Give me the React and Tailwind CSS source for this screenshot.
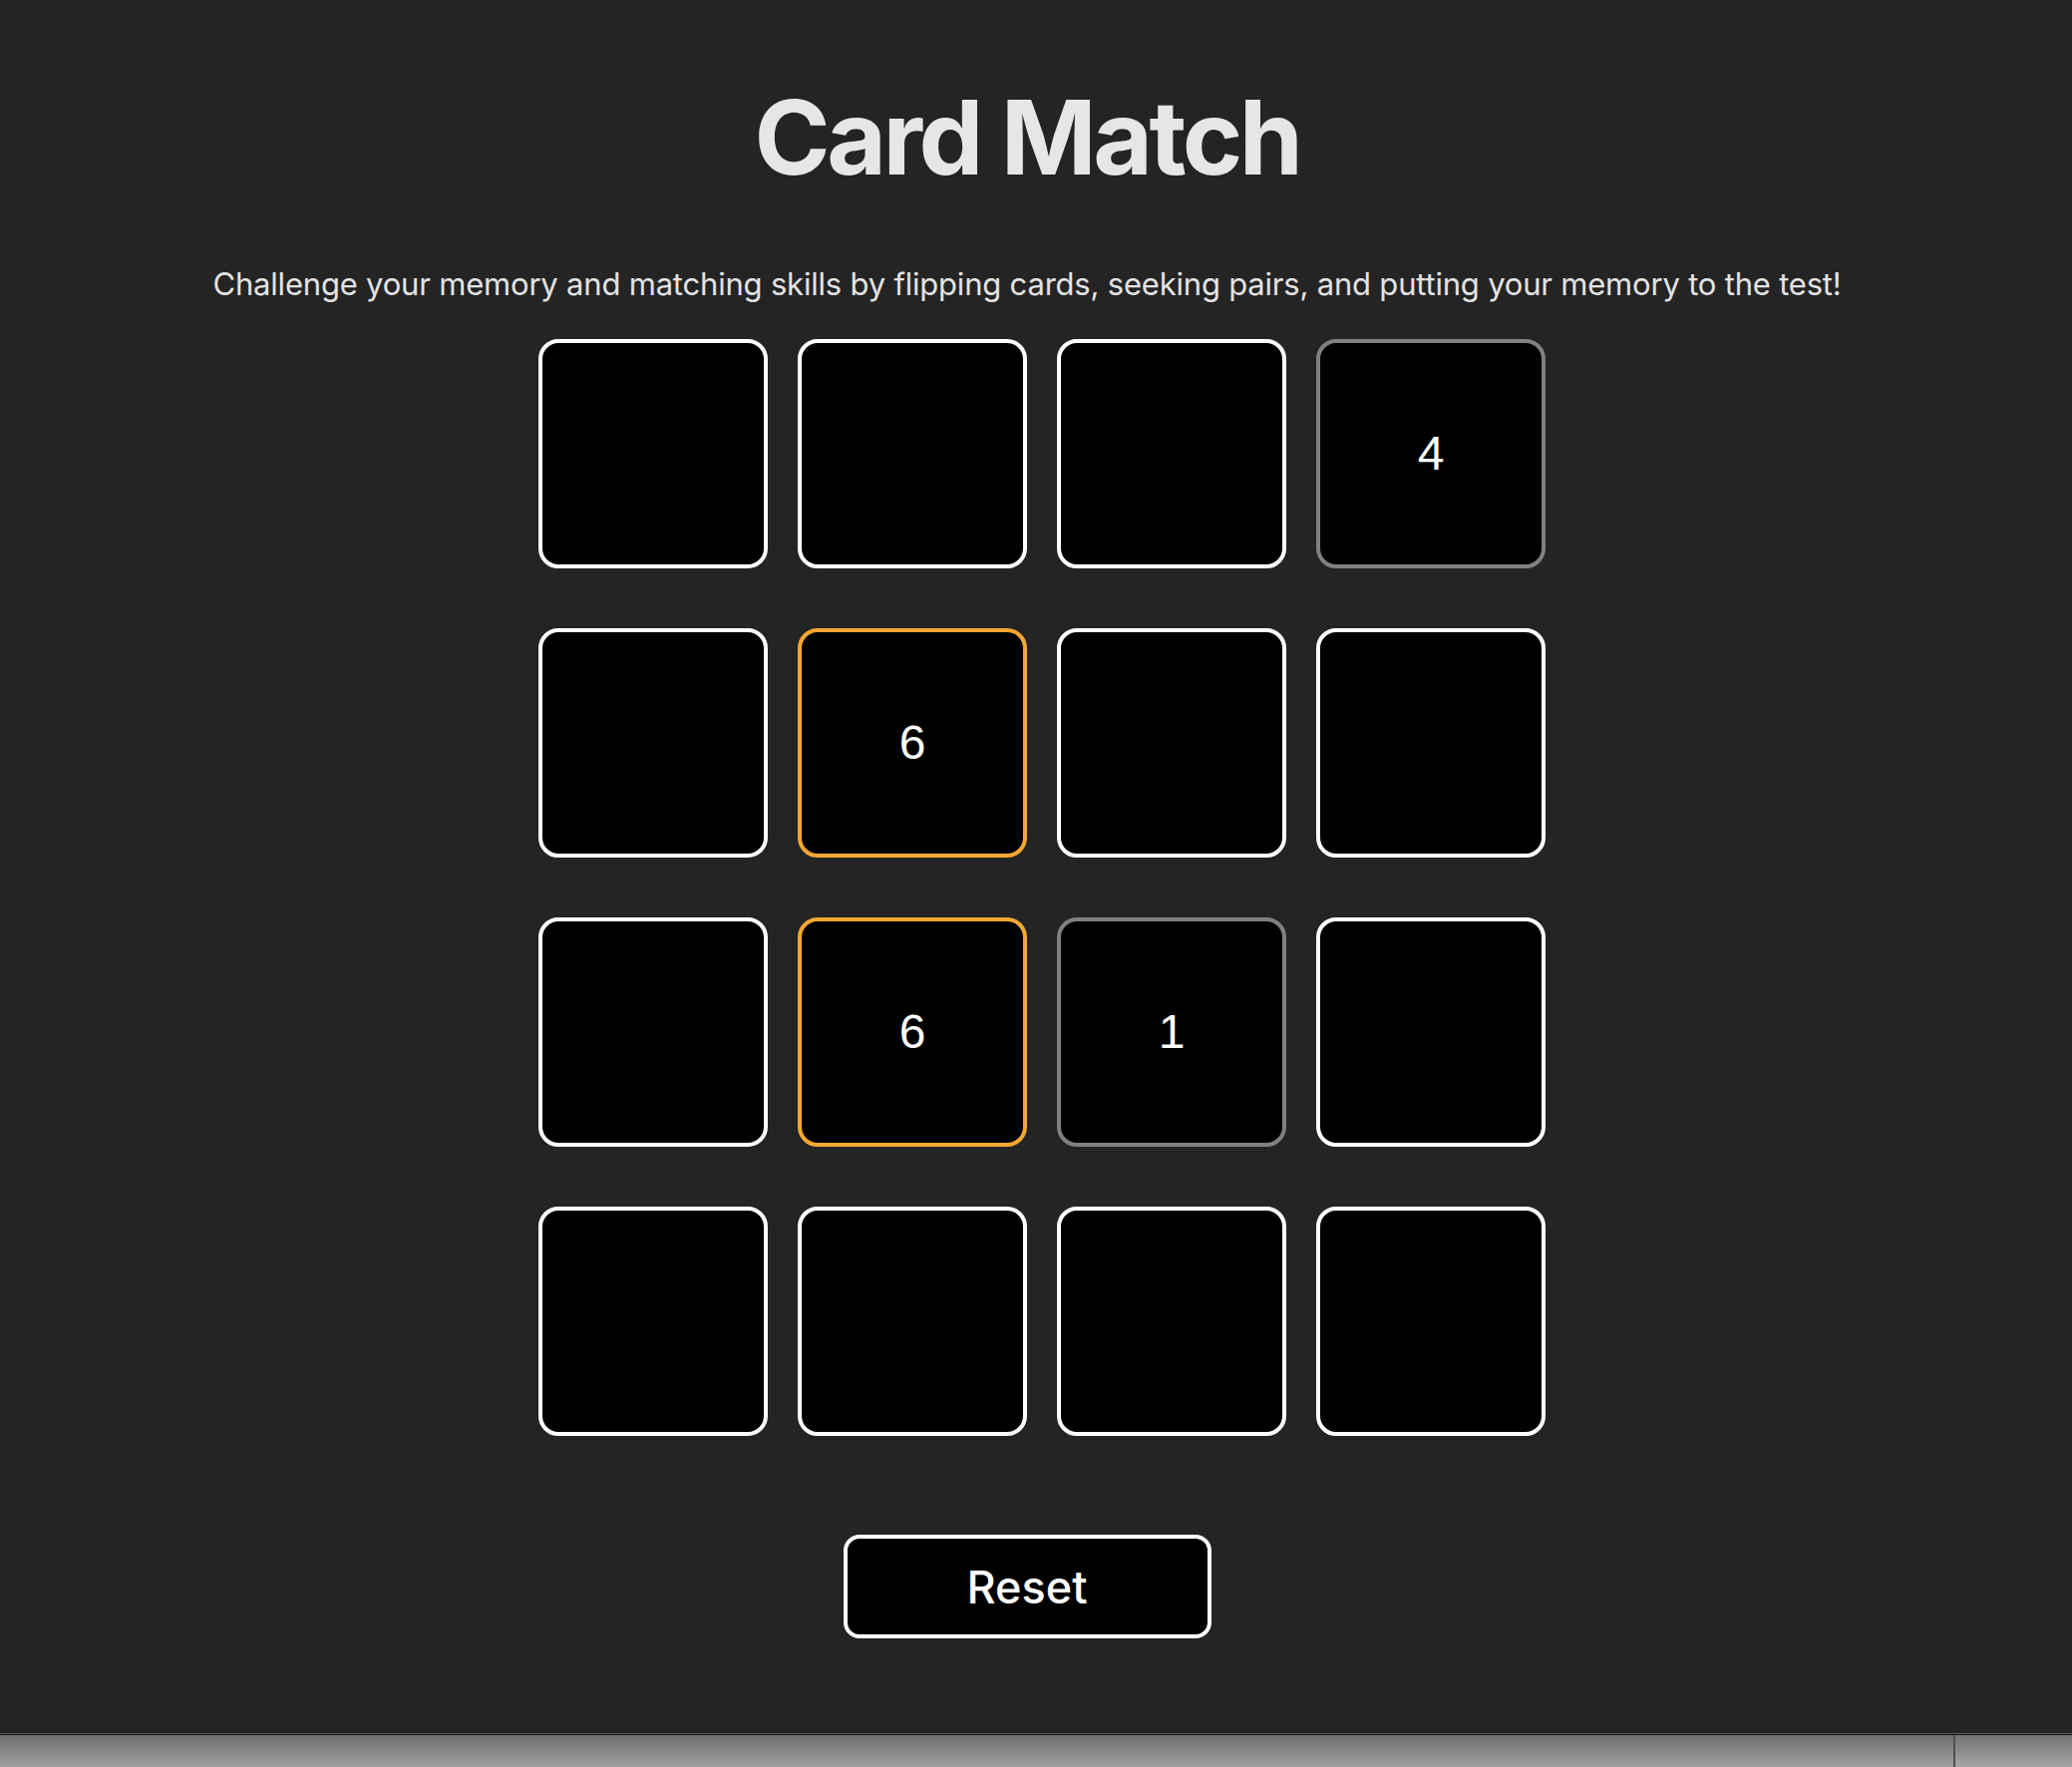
import { useState } from 'react';

// card states: hidden, flipped (orange), matched (gray)
const initialCards = [
  { value: 3, state: 'hidden' },
  { value: 5, state: 'hidden' },
  { value: 2, state: 'hidden' },
  { value: 4, state: 'matched' },
  { value: 8, state: 'hidden' },
  { value: 6, state: 'flipped' },
  { value: 7, state: 'hidden' },
  { value: 2, state: 'hidden' },
  { value: 5, state: 'hidden' },
  { value: 6, state: 'flipped' },
  { value: 1, state: 'matched' },
  { value: 3, state: 'hidden' },
  { value: 7, state: 'hidden' },
  { value: 8, state: 'hidden' },
  { value: 4, state: 'hidden' },
  { value: 1, state: 'hidden' },
];

const borderFor = {
  hidden: 'border-white',
  flipped: 'border-[#f5a733]',
  matched: 'border-[#808080]',
};

function Card({ card }) {
  return (
    <button
      className={`flex h-[230px] w-[230px] items-center justify-center rounded-[20px] border-4 bg-black text-[48px] leading-none text-white ${borderFor[card.state]}`}
      style={{ fontFamily: '"Liberation Sans", Arial, sans-serif' }}
    >
      {card.state !== 'hidden' ? card.value : ''}
    </button>
  );
}

export default function App() {
  const [cards, setCards] = useState(initialCards);

  const reset = () => {
    setCards(initialCards.map((c) => ({ ...c, state: 'hidden' })));
  };

  return (
    <div
      className="flex h-[1772px] w-full flex-col bg-[#242424]"
      style={{ fontFamily: 'Inter, "Noto Sans", sans-serif' }}
    >
      <main className="flex flex-1 flex-col items-center pr-[18px]">
        <h1 className="mt-[86px] text-[103px] font-bold leading-none tracking-[-0.034em] text-[#e6e6e6]">
          Card Match
        </h1>
        <p className="mt-[80px] text-[31px] leading-none tracking-[-0.2px] text-[#e3e3e3]">
          Challenge your memory and matching skills by flipping cards, seeking pairs, and putting your memory to the test!
        </p>
        <div className="ml-[30px] mt-[40px] grid grid-cols-4 gap-x-[30px] gap-y-[60px]">
          {cards.map((card, i) => (
            <Card key={i} card={card} />
          ))}
        </div>
        <button
          onClick={reset}
          className="mt-[99px] flex h-[104px] w-[369px] items-center justify-center rounded-[16px] border-4 border-white bg-black text-[45px] font-medium leading-none text-white"
        >
          Reset
        </button>
      </main>
      <footer className="flex h-[34px] flex-col">
        <div className="h-px bg-[#5c5c5c]" />
        <div className="h-px bg-[#111111]" />
        <div className="flex flex-1">
          <div className="flex-1 bg-gradient-to-b from-[#6e6e6e] to-[#a0a0a0]" />
          <div className="w-[2px] bg-[#4f4f4f]" />
          <div className="w-[117px] bg-gradient-to-b from-[#727272] to-[#a6a6a6]" />
        </div>
      </footer>
    </div>
  );
}
